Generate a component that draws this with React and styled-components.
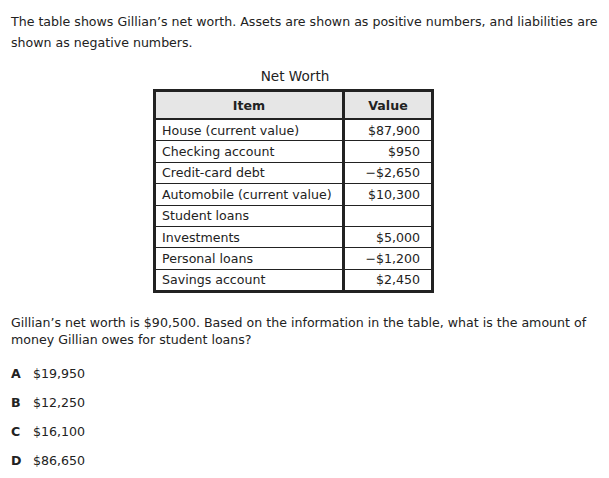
import React from "react";
import styled, { createGlobalStyle } from "styled-components";

const Global = createGlobalStyle`
  body {
    margin: 0;
    background: #fff;
    font-family: "DejaVu Sans", Verdana, sans-serif;
    color: #222;
  }
`;

const Page = styled.div`
  width: 609px;
  height: 478px;
  padding: 11px 0 0 11px;
  box-sizing: border-box;
  font-size: 12.6px;
`;

const Para = styled.p`
  margin: 0;
  line-height: 21px;
`;

const Caption = styled.div`
  margin: 15px 0 5px 0;
  width: 568px;
  text-align: center;
  font-size: 13.6px;
`;

const Table = styled.table`
  margin-left: 142px;
  border-collapse: collapse;
  border: 3px solid #222;
  table-layout: fixed;
`;

const Head = styled.th`
  background: #e6e6e6;
  height: 26px;
  padding: 0;
  font-weight: bold;
  text-align: center;
  border-bottom: 2px solid #222;
  border-left: ${({ $divider }) => ($divider ? "3px solid #222" : "none")};
  width: ${({ $w }) => $w}px;
`;

const Cell = styled.td`
  height: 20.4px;
  padding: 0 ${({ $right }) => ($right ? "11px" : "6px")} 0 6px;
  border-top: 1px solid #222;
  white-space: nowrap;
  text-align: ${({ $right }) => ($right ? "right" : "left")};
  border-left: ${({ $right }) => ($right ? "3px solid #222" : "none")};
`;

const Question = styled.p`
  margin: 21px 0 0 0;
  line-height: 17px;
`;

const Options = styled.div`
  margin-top: 17px;
  display: flex;
  flex-direction: column;
  gap: 12px;
`;

const Option = styled.div`
  display: flex;
  align-items: center;
  line-height: 17px;
`;

const Letter = styled.span`
  font-weight: bold;
  width: 22px;
`;

const rows = [
  ["House (current value)", "$87,900"],
  ["Checking account", "$950"],
  ["Credit-card debt", "\u2212$2,650"],
  ["Automobile (current value)", "$10,300"],
  ["Student loans", ""],
  ["Investments", "$5,000"],
  ["Personal loans", "\u2212$1,200"],
  ["Savings account", "$2,450"],
];

const options = [
  ["A", "$19,950"],
  ["B", "$12,250"],
  ["C", "$16,100"],
  ["D", "$86,650"],
];

export default function App() {
  return (
    <Page>
      <Global />
      <Para>
        The table shows Gillian’s net worth. Assets are shown as positive numbers, and liabilities are
        shown as negative numbers.
      </Para>
      <Caption>Net Worth</Caption>
      <Table>
        <thead>
          <tr>
            <Head $w={186}>Item</Head>
            <Head $w={86} $divider>Value</Head>
          </tr>
        </thead>
        <tbody>
          {rows.map(([item, value]) => (
            <tr key={item}>
              <Cell>{item}</Cell>
              <Cell $right>{value}</Cell>
            </tr>
          ))}
        </tbody>
      </Table>
      <Question>
        Gillian’s net worth is $90,500. Based on the information in the table, what is the amount of
        money Gillian owes for student loans?
      </Question>
      <Options>
        {options.map(([l, v]) => (
          <Option key={l}>
            <Letter>{l}</Letter>
            <span>{v}</span>
          </Option>
        ))}
      </Options>
    </Page>
  );
}
